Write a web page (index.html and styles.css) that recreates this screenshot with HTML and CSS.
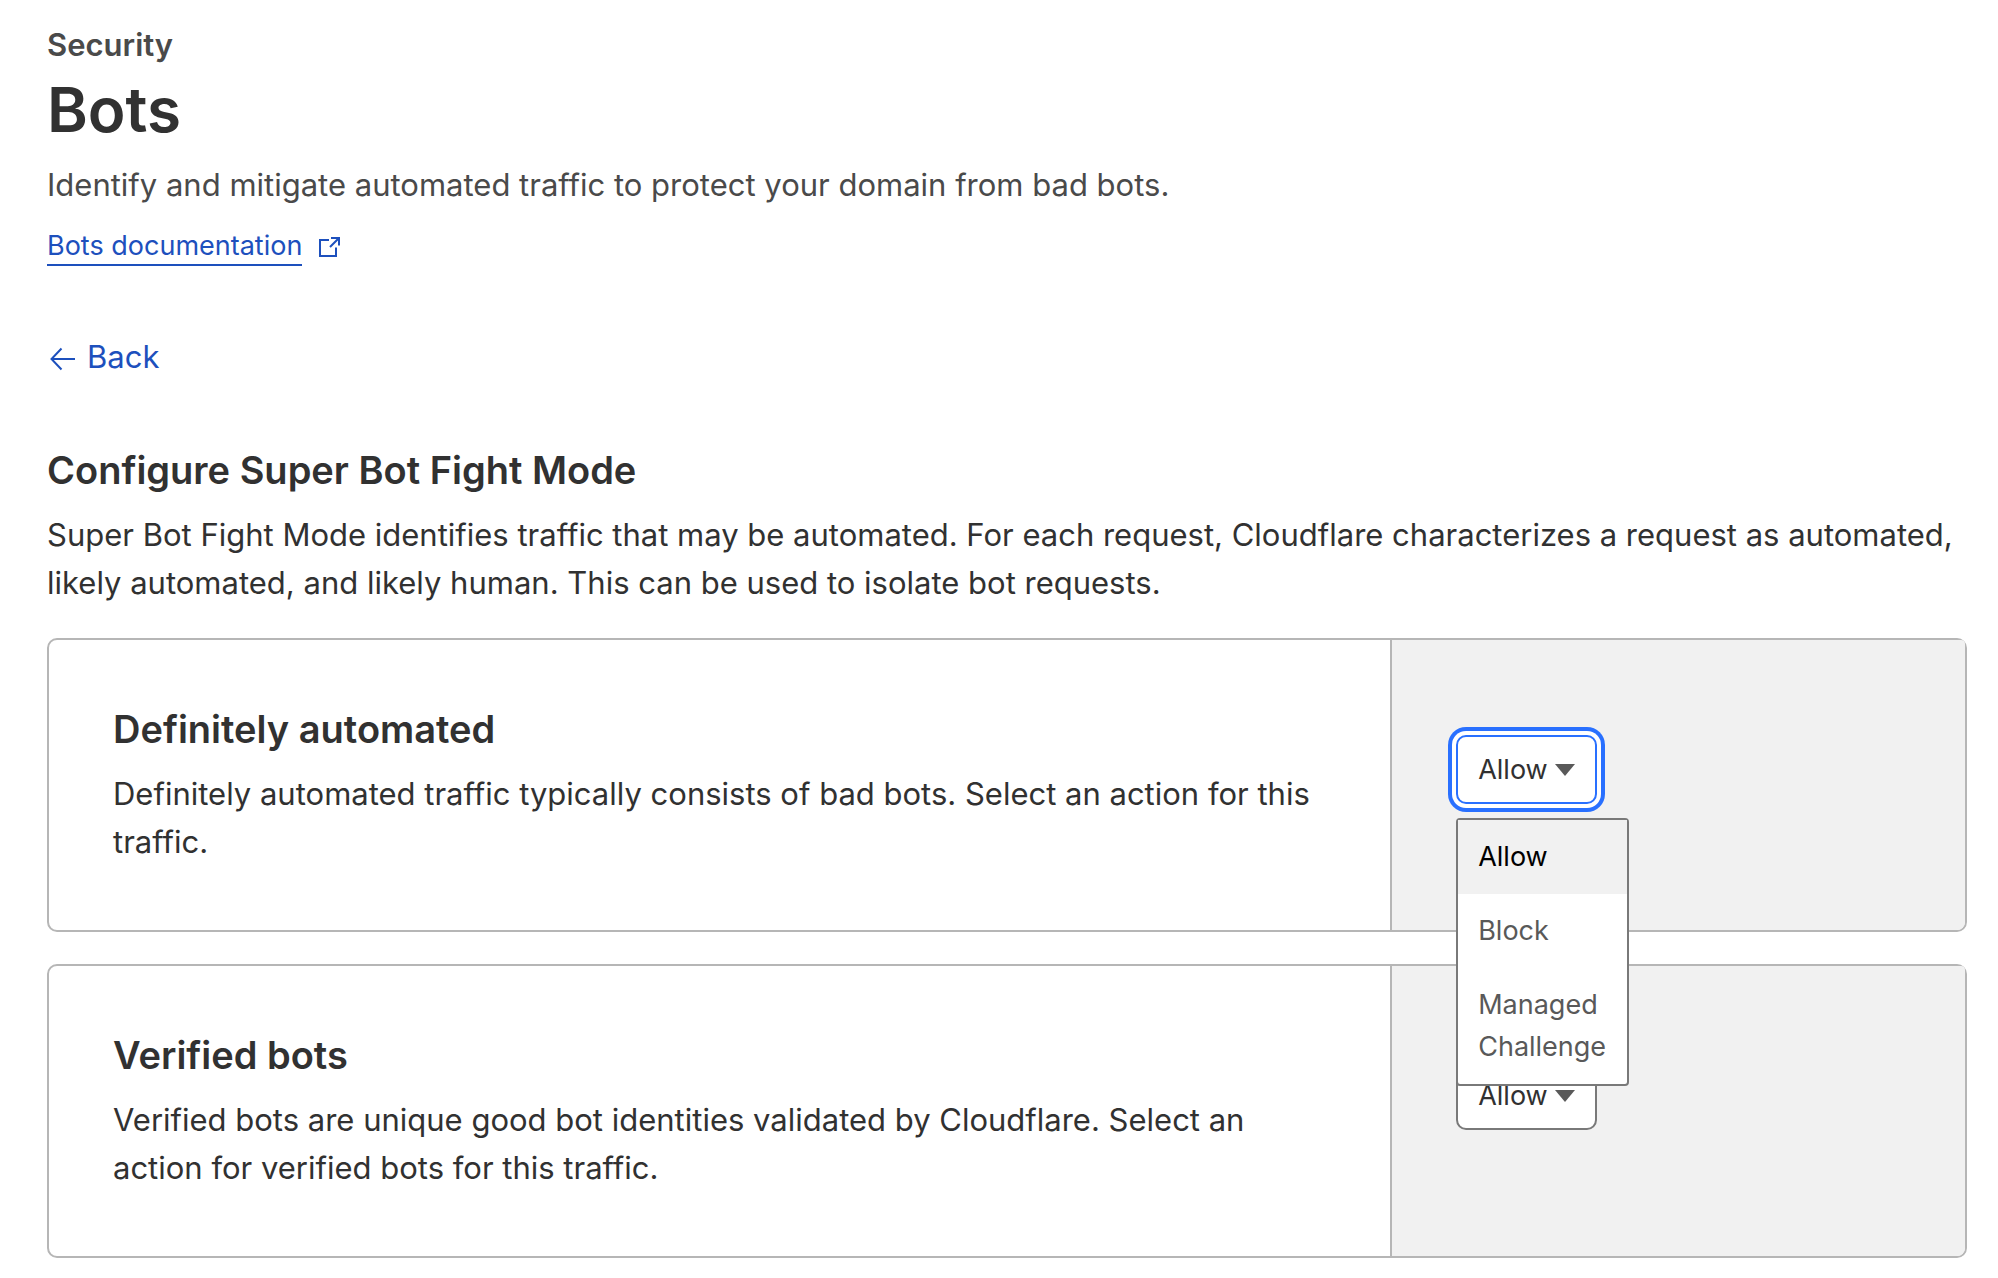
FILE: index.html
```html
<!DOCTYPE html>
<html lang="en">
<head>
<meta charset="utf-8">
<title>Bots</title>
<meta name="viewport" content="width=device-width, initial-scale=1">
<link rel="stylesheet" href="styles.css">
</head>
<body>
<main class="page">
  <header class="intro">
    <p class="eyebrow">Security</p>
    <h1 class="title">Bots</h1>
    <p class="lead">Identify and mitigate automated traffic to protect your domain from bad bots.</p>
    <a class="doc-link" href="#docs"><span class="doc-text">Bots documentation</span>
      <svg class="doc-icon" viewBox="0 0 22 22" aria-hidden="true"><path d="M11 4H2V20H18V11.500M12 11L20.500 2.500M13 2H21V9.500"/></svg>
    </a>
  </header>

  <a class="back" href="#back">
    <svg class="back-icon" viewBox="0 0 28 28" aria-hidden="true"><path d="M28 16H4.500M14.500 5.500L4.500 16L14.500 26.500"/></svg>
    Back
  </a>

  <section class="config">
    <h2 class="heading">Configure Super Bot Fight Mode</h2>
    <p class="text">Super Bot Fight Mode identifies traffic that may be automated. For each request, Cloudflare characterizes a request as automated, likely automated, and likely human. This can be used to isolate bot requests.</p>

    <div class="cards">
      <article class="card">
        <div class="card-body">
          <h3 class="heading"><label for="automated">Definitely automated</label></h3>
          <p class="text">Definitely automated traffic typically consists of bad bots. Select an action for this traffic.</p>
        </div>
        <div class="card-action">
          <div class="picker">
            <select id="automated" class="select is-focused">
              <option>Allow</option><option>Block</option><option>Managed Challenge</option>
            </select>
            <svg class="caret" viewBox="0 0 20 12" aria-hidden="true"><path d="M0 0H20L10 12Z"/></svg>
            <ul class="menu" role="listbox" aria-label="Action">
              <li class="option is-selected" role="option" aria-selected="true">Allow</li>
              <li class="option" role="option" aria-selected="false">Block</li>
              <li class="option" role="option" aria-selected="false">Managed Challenge</li>
            </ul>
          </div>
        </div>
      </article>

      <article class="card">
        <div class="card-body">
          <h3 class="heading"><label for="verified">Verified bots</label></h3>
          <p class="text">Verified bots are unique good bot identities validated by Cloudflare. Select an action for verified bots for this traffic.</p>
        </div>
        <div class="card-action">
          <div class="picker">
            <select id="verified" class="select">
              <option>Allow</option><option>Block</option><option>Managed Challenge</option>
            </select>
            <svg class="caret" viewBox="0 0 20 12" aria-hidden="true"><path d="M0 0H20L10 12Z"/></svg>
          </div>
        </div>
      </article>
    </div>
  </section>
</main>
</body>
</html>
```
FILE: styles.css
```css
* { box-sizing: border-box; }

body {
  margin: 0;
  background: #fff;
  color: #313131;
  font-family: Inter, "Liberation Sans", sans-serif;
  font-size: 31px;
  line-height: 48px;
}

h1, h2, h3, p, ul { margin: 0; padding: 0; }
ul { list-style: none; }

.page { padding: 21px 31px 20px 47px; }

.intro {
  display: flex;
  flex-direction: column;
  align-items: flex-start;
}

.eyebrow { color: #4a4a4a; font-weight: 600; }
.title { font-size: 62px; font-weight: 600; line-height: 82px; }
.lead { margin-top: 10px; color: #4a4a4a; }

.doc-link {
  display: flex;
  align-items: center;
  gap: 16px;
  margin-top: 19px;
  color: #1d50bd;
  font-size: 27px;
  line-height: 36px;
  text-decoration: none;
}
.doc-text { border-bottom: 2px solid; }
.doc-icon { width: 22px; height: 22px; }
.doc-icon, .back-icon { fill: none; stroke: currentColor; stroke-width: 2; }

.back {
  display: flex;
  align-items: center;
  gap: 12px;
  width: fit-content;
  margin-top: 67px;
  color: #1d50bd;
  text-decoration: none;
}
.back-icon { width: 28px; height: 28px; }

.config { margin-top: 64px; }
.heading { font-size: 38px; font-weight: 600; line-height: 50px; }
.text { margin-top: 16px; }

.cards { display: grid; gap: 32px; margin-top: 31px; }
.card {
  display: grid;
  grid-template-columns: 7fr 3fr;
  border: 2px solid #b6b6b6;
  border-radius: 10px;
}
.card-body { padding: 64px; }
.card-action {
  display: flex;
  align-items: center;
  padding: 0 64px;
  border-left: 2px solid #b6b6b6;
  border-radius: 0 4px 8px 0;
  background: #f1f1f1;
}

.picker { position: relative; display: grid; align-items: center; margin-bottom: 31px; }
.select, .caret { grid-area: 1 / 1; }
.select {
  appearance: none;
  width: 141px;
  height: 69px;
  padding: 0 20px;
  border: 2px solid #797979;
  border-radius: 10px;
  background: #fff;
  color: #313131;
  font: inherit;
  font-size: 27px;
}
.select.is-focused {
  border-color: #2970ff;
  outline: none;
  box-shadow: 0 0 0 4px #fff, 0 0 0 8px #2970ff;
}
.caret {
  justify-self: end;
  width: 20px;
  height: 12px;
  margin-right: 22px;
  fill: #595959;
  pointer-events: none;
}

.menu {
  position: absolute;
  z-index: 1;
  top: 100%;
  left: 0;
  width: 173px;
  margin-top: 14px;
  border: 2px solid #797979;
  border-radius: 4px;
  background: #fff;
  font-size: 27px;
  line-height: 42px;
}
.option { padding: 16px 20px; color: #595959; }
.option.is-selected { background: #f1f1f1; color: #000; }
```
